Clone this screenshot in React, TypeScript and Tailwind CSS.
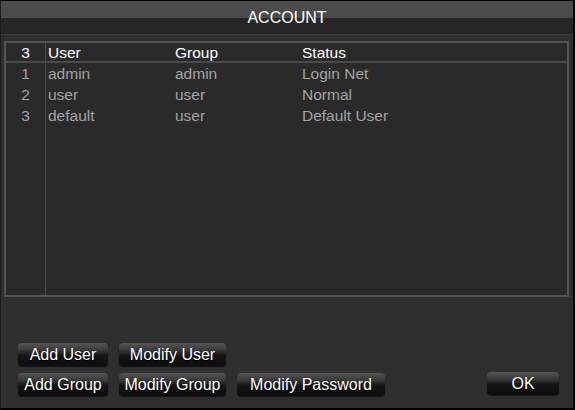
import React from "react";

const rows = [
  { n: "1", user: "admin", group: "admin", status: "Login Net" },
  { n: "2", user: "user", group: "user", status: "Normal" },
  { n: "3", user: "default", group: "user", status: "Default User" },
];

function Btn({ label, w }: { label: string; w: string }) {
  return (
    <button
      className={`${w} h-[23px] rounded-[4px] bg-[linear-gradient(to_bottom,#555555_0%,#3a3a3a_30%,#151515_55%,#0c0c0c_100%)] text-[16px] leading-[23px] text-white shadow-[0_1px_1px_rgba(0,0,0,0.6)] [text-shadow:0_1px_1px_#000]`}
    >
      {label}
    </button>
  );
}

export default function App() {
  return (
    <div
      className="w-[575px] h-[410px] bg-[#2f2f2f] border-t border-t-black border-l border-l-[#1c1c1c] border-r-2 border-r-black border-b-2 border-b-black flex flex-col"
      style={{ fontFamily: '"Liberation Sans", Arial, sans-serif' }}
    >
      <div className="h-[17px] bg-[#4b4b4b] flex items-center justify-center">
        <span className="text-white text-[16px] leading-[17px] translate-y-[8px] relative z-10">ACCOUNT</span>
      </div>
      <div className="h-[17px] bg-[#262626] border-b border-b-[#3f3f3f]"></div>
      <div className="flex-1 flex flex-col px-[3px] pt-[6px]">
        <div className="mr-[1px] h-[256px] border-2 border-[#545454] bg-[#2a2a2a] flex flex-col text-[15.5px]">
          <div className="h-[20px] flex border-b-2 border-b-[#4a4a4a] text-white leading-[20px]">
            <div className="w-[40px] text-center border-r border-r-[#4a4a4a]">3</div>
            <div className="w-[127px] pl-[2px]">User</div>
            <div className="w-[127px] pl-[2px]">Group</div>
            <div className="flex-1 pl-[2px]">Status</div>
          </div>
          <div className="flex-1 flex">
            <div className="w-[40px] border-r border-r-[#4a4a4a] flex flex-col text-[#a3a3a3]">
              {rows.map((r) => (
                <div key={r.n} className="h-[21px] leading-[21px] text-center">
                  {r.n}
                </div>
              ))}
            </div>
            <div className="flex-1 flex flex-col text-[#a3a3a3]">
              {rows.map((r) => (
                <div key={r.n} className="h-[21px] leading-[21px] flex">
                  <div className="w-[127px] pl-[2px]">{r.user}</div>
                  <div className="w-[127px] pl-[2px]">{r.group}</div>
                  <div className="flex-1 pl-[2px]">{r.status}</div>
                </div>
              ))}
            </div>
          </div>
        </div>
        <div className="flex-1"></div>
        <div className="flex flex-col gap-[6px] pb-[12px] pl-[14px]">
          <div className="flex gap-[11px]">
            <Btn label="Add User" w="w-[90px]" />
            <Btn label="Modify User" w="w-[107px]" />
          </div>
          <div className="flex items-center">
            <div className="flex gap-[11px]">
              <Btn label="Add Group" w="w-[90px]" />
              <Btn label="Modify Group" w="w-[107px]" />
              <Btn label="Modify Password" w="w-[148px]" />
            </div>
            <div className="ml-[102px]">
              <Btn label="OK" w="w-[72px]" />
            </div>
          </div>
        </div>
      </div>
    </div>
  );
}
